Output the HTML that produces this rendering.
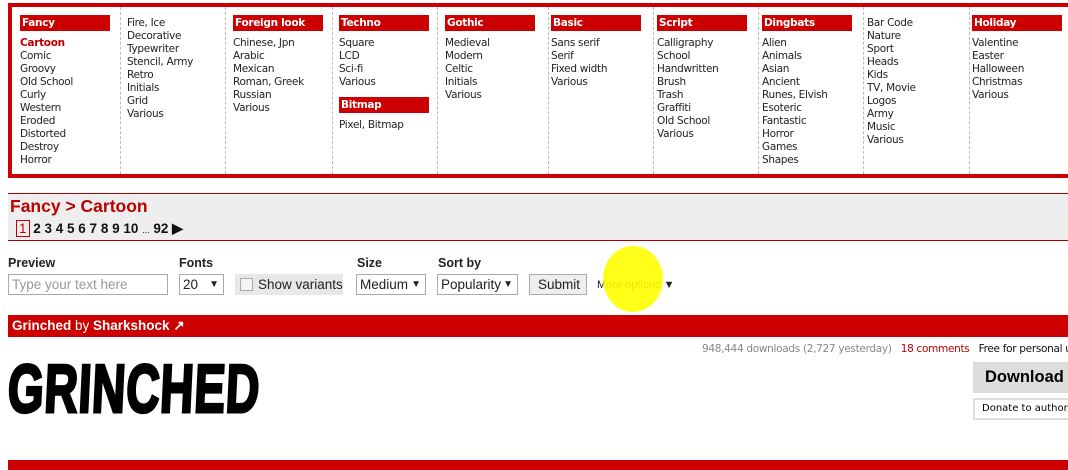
<!DOCTYPE html>
<html><head><style>
body{margin:0;width:1068px;height:468px;overflow:hidden;background:#fff;font-family:"DejaVu Sans",Verdana,sans-serif;position:relative}
.box{position:absolute;left:8px;top:3px;width:1070px;height:167px;border:4px solid #c00;border-right:none}
.col{position:absolute;top:4px;font-size:10.5px;line-height:13px;color:#222;letter-spacing:-0.3px;white-space:nowrap}
.sep{position:absolute;top:0;height:167px;border-left:1px dashed #bbb}
.h{background:#c00;color:#fff;font-weight:bold;font-size:10.5px;height:16px;line-height:16px;padding-left:2px;width:88px;margin:4px 0 6px;letter-spacing:-0.3px}
.col.t{top:10px}
.a{font-family:"Liberation Sans",Arial,sans-serif}
.crumb{position:absolute;left:8px;top:193px;width:1060px;height:46px;background:#eee;border-top:1px solid #a00;border-bottom:1px solid #a00}
.lbl{position:absolute;top:256px;font:bold 12.5px "Liberation Sans",Arial,sans-serif;color:#222}
.fld{position:absolute;top:274px;border:1px solid #aaa;background:#fff;font:13.5px "Liberation Sans",Arial,sans-serif;color:#222;line-height:19px;padding-left:3px;box-sizing:border-box;height:21px;white-space:nowrap}
.bar{position:absolute;left:8px;width:1060px;background:#c00;color:#fff;font:bold 13.5px "Liberation Sans",Arial,sans-serif}
</style></head><body>
<div class="box">
<div class="sep" style="left:108px"></div><div class="sep" style="left:213px"></div><div class="sep" style="left:320px"></div><div class="sep" style="left:425px"></div><div class="sep" style="left:536px"></div><div class="sep" style="left:641px"></div><div class="sep" style="left:746px"></div><div class="sep" style="left:851px"></div><div class="sep" style="left:957px"></div>
<div class="col" style="left:8px"><div class="h">Fancy</div><b style="color:#b00">Cartoon</b><br>Comic<br>Groovy<br>Old School<br>Curly<br>Western<br>Eroded<br>Distorted<br>Destroy<br>Horror</div>
<div class="col t" style="left:115px">Fire, Ice<br>Decorative<br>Typewriter<br>Stencil, Army<br>Retro<br>Initials<br>Grid<br>Various</div>
<div class="col" style="left:221px"><div class="h">Foreign look</div>Chinese, Jpn<br>Arabic<br>Mexican<br>Roman, Greek<br>Russian<br>Various</div>
<div class="col" style="left:327px"><div class="h">Techno</div>Square<br>LCD<br>Sci-fi<br>Various<div class="h" style="margin-top:8px">Bitmap</div>Pixel, Bitmap</div>
<div class="col" style="left:433px"><div class="h">Gothic</div>Medieval<br>Modern<br>Celtic<br>Initials<br>Various</div>
<div class="col" style="left:539px"><div class="h">Basic</div>Sans serif<br>Serif<br>Fixed width<br>Various</div>
<div class="col" style="left:645px"><div class="h">Script</div>Calligraphy<br>School<br>Handwritten<br>Brush<br>Trash<br>Graffiti<br>Old School<br>Various</div>
<div class="col" style="left:750px"><div class="h">Dingbats</div>Alien<br>Animals<br>Asian<br>Ancient<br>Runes, Elvish<br>Esoteric<br>Fantastic<br>Horror<br>Games<br>Shapes</div>
<div class="col t" style="left:855px">Bar Code<br>Nature<br>Sport<br>Heads<br>Kids<br>TV, Movie<br>Logos<br>Army<br>Music<br>Various</div>
<div class="col" style="left:960px"><div class="h">Holiday</div>Valentine<br>Easter<br>Halloween<br>Christmas<br>Various</div>
</div>
<div class="crumb"><div class="a" style="position:absolute;left:2px;top:2px;font-weight:bold;font-size:17.5px;color:#b00">Fancy &gt; Cartoon</div>
<div class="a" style="position:absolute;left:8px;top:26px;font-size:13.5px;font-weight:bold;color:#111;word-spacing:0px;white-space:nowrap"><span style="border:1px solid #c00;color:#c00;font-weight:normal;padding:0 2px">1</span> 2 3 4 5 6 7 8 9 10 <span style="font-size:9px;font-weight:normal">...</span> 92 <span style="font-size:14px">&#9654;</span></div></div>
<div class="lbl" style="left:8px">Preview</div><div class="lbl" style="left:179px">Fonts</div><div class="lbl" style="left:357px">Size</div><div class="lbl" style="left:438px">Sort by</div>
<div class="fld" style="left:8px;width:160px;color:#999">Type your text here</div>
<div class="fld" style="left:179px;width:45px">20 <span style="font-size:10px;position:absolute;right:4px">&#9660;</span></div>
<div class="fld" style="left:235px;width:108px;background:#e8e8e8;border-color:#e8e8e8;padding-left:22px">Show variants<span style="position:absolute;left:4px;top:3px;width:11px;height:11px;border:1px solid #aaa;background:#f4f4f4"></span></div>
<div class="fld" style="left:356px;width:70px">Medium<span style="font-size:10px;position:absolute;right:4px">&#9660;</span></div>
<div class="fld" style="left:437px;width:81px">Popularity<span style="font-size:10px;position:absolute;right:4px">&#9660;</span></div>
<div class="fld" style="left:529px;width:58px;background:#eee;padding-left:8px">Submit</div>
<div class="a" style="position:absolute;left:597px;top:279px;font-size:11px;color:#222;white-space:nowrap">More options &#9660;</div>
<div style="position:absolute;left:603px;top:246px;width:60px;height:66px;border-radius:50%;background:#ffff00;opacity:.9"></div>
<div class="bar" style="top:315px;height:22px;line-height:22px;padding-left:4px;box-sizing:border-box">Grinched <span style="font-weight:normal">by</span> Sharkshock &#8599;</div>
<div style="position:absolute;left:702px;top:343px;font-size:10.5px;color:#888;white-space:nowrap;letter-spacing:-0.3px">948,444 downloads (2,727 yesterday) &nbsp;&nbsp;<span style="color:#b00">18 comments</span> &nbsp;&nbsp;<span style="color:#111">Free for personal use</span></div>
<div class="a" style="position:absolute;left:973px;top:362px;width:100px;height:31px;background:#ddd;font-weight:bold;font-size:16.5px;line-height:31px;padding-left:12px;box-sizing:border-box">Download</div>
<div style="position:absolute;left:973px;top:398px;width:100px;height:22px;border:2px solid #ddd;box-sizing:border-box;font-size:10px;line-height:18px;padding-left:7px;white-space:nowrap">Donate to author</div>
<div style="position:absolute;left:8px;top:350px;font:bold 68px 'Liberation Sans',Impact,sans-serif;letter-spacing:1px;transform:scaleX(0.68) skewX(-4deg);transform-origin:left;color:#000;-webkit-text-stroke:3px #000">GRINCHED</div>
<div class="bar" style="top:460px;height:10px"></div>
</body></html>
